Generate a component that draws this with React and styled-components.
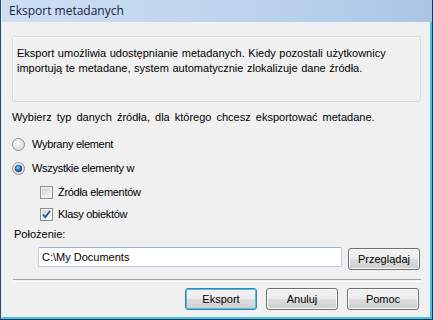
import React from "react";
import styled, { createGlobalStyle } from "styled-components";

const GlobalStyle = createGlobalStyle`
  html, body {
    margin: 0;
    padding: 0;
    background: #f0f0f0;
  }
  body {
    font-family: "Liberation Sans", Arial, sans-serif;
    font-size: 11px;
    color: #000;
  }
`;

const Radio = ({ checked }) => (
  <svg width="13" height="13" viewBox="0 0 13 13">
    <defs>
      <radialGradient id={checked ? "rOn" : "rOff"} cx="0.4" cy="0.35" r="0.7">
        <stop offset="0" stopColor="#ffffff" />
        <stop offset="1" stopColor="#d0d0d0" />
      </radialGradient>
      <radialGradient id="dot" cx="0.4" cy="0.35" r="0.7">
        <stop offset="0" stopColor="#8ad4ff" />
        <stop offset="0.6" stopColor="#1b76c4" />
        <stop offset="1" stopColor="#0a3d78" />
      </radialGradient>
    </defs>
    <circle cx="6.5" cy="6.5" r="6" fill={`url(#${checked ? "rOn" : "rOff"})`} stroke="#8e8f8f" />
    <circle cx="6.5" cy="6.5" r="4.5" fill="none" stroke="#e8e8e8" />
    {checked && <circle cx="6.5" cy="6.5" r="3.3" fill="url(#dot)" stroke="#1b3f6a" strokeWidth="0.8" />}
  </svg>
);

const Check = ({ checked }) => (
  <svg width="13" height="13" viewBox="0 0 13 13">
    <defs>
      <linearGradient id="cb" x1="0" y1="0" x2="1" y2="1">
        <stop offset="0" stopColor="#cbcfd5" />
        <stop offset="1" stopColor="#f6f6f6" />
      </linearGradient>
    </defs>
    <rect x="0.5" y="0.5" width="12" height="12" fill="#f4f4f4" stroke="#8e8f8f" />
    <rect x="2" y="2" width="9" height="9" fill="url(#cb)" stroke="#f0f0f0" strokeWidth="0.5" />
    {checked && (
      <path d="M3 6.5 L5.2 9.2 L10 3" fill="none" stroke="#2a4a8a" strokeWidth="1.8" strokeLinejoin="round" />
    )}
  </svg>
);

const App = () => (
  <>
    <GlobalStyle />
    <Window>
      <TitleBar>Eksport metadanych</TitleBar>
      <Client>
        <InfoBox>
          Eksport umożliwia udostępnianie metadanych. Kiedy pozostali użytkownicy
          <br />
          importują te metadane, system automatycznie zlokalizuje dane źródła.
        </InfoBox>
        <Prompt>Wybierz typ danych źródła, dla którego chcesz eksportować metadane.</Prompt>
        <Option $top={11}>
          <Radio />
          <Label $gap={7}>Wybrany element</Label>
        </Option>
        <Option $top={8}>
          <Radio checked />
          <Label $gap={7}>Wszystkie elementy w</Label>
        </Option>
        <Option $top={8} $indent={28}>
          <Check />
          <Label $gap={5}>Źródła elementów</Label>
        </Option>
        <Option $top={6} $indent={28}>
          <Check checked />
          <Label $gap={5}>Klasy obiektów</Label>
        </Option>
        <Caption>Położenie:</Caption>
        <PathRow>
          <PathInput defaultValue="C:\My Documents" />
          <Button $raised>Przeglądaj</Button>
        </PathRow>
        <Separator />
        <ButtonBar>
          <Button $default>Eksport</Button>
          <Button>Anuluj</Button>
          <Button>Pomoc</Button>
        </ButtonBar>
      </Client>
    </Window>
  </>
);

const Window = styled.div`
  width: 433px;
  height: 320px;
  box-sizing: border-box;
  display: flex;
  flex-direction: column;
  border-left: 1px solid #2c4d74;
  border-right: 1px solid #1d3550;
  border-bottom: 1px solid #1d3550;
  background: #f0f0f0;
`;

const TitleBar = styled.div`
  height: 22px;
  box-sizing: border-box;
  padding: 3px 0 0 7px;
  background: linear-gradient(to right, #cddff2 0%, #bcd3ec 60%, #a9c6e6 100%);
  border-left: 1px solid #dfeaf6;
  font-family: "Open Sans", "Noto Sans", sans-serif;
  font-size: 12px;
  line-height: 16px;
  color: #1c1b42;
`;

const Client = styled.div`
  flex: 1;
  display: flex;
  flex-direction: column;
  padding: 14px 9px 0 10px;
  border-left: 1px solid #dfeaf6;
  border-right: 2px solid #3fc3e6;
  border-bottom: 2px solid #3fc3e6;
  box-sizing: border-box;
`;

const InfoBox = styled.div`
  height: 66px;
  box-sizing: border-box;
  padding: 9px 0 0 4px;
  border: 1px solid #d5dde4;
  border-radius: 3px;
  box-shadow: inset 1px 1px 0 #ffffff;
  line-height: 15px;
  word-spacing: 0.5px;
`;

const Prompt = styled.div`
  margin-top: 8px;
  line-height: 15px;
  word-spacing: 2px;
`;

const Option = styled.div`
  display: flex;
  align-items: center;
  height: 16px;
  margin-top: ${(p) => p.$top}px;
  padding-left: ${(p) => p.$indent || 0}px;
`;

const Label = styled.span`
  margin-left: ${(p) => p.$gap}px;
  letter-spacing: -0.3px;
`;

const Caption = styled.div`
  margin-top: 5px;
  padding-left: 2px;
  line-height: 15px;
`;

const PathRow = styled.div`
  display: flex;
  align-items: flex-start;
  gap: 6px;
  margin-top: 5px;
  padding-left: 26px;
  height: 22px;
`;

const PathInput = styled.input`
  width: 304px;
  height: 20px;
  box-sizing: border-box;
  padding: 0 3px;
  border: 1px solid #b8cde0;
  border-top-color: #9ab3cb;
  border-radius: 2px;
  background: #fff;
  font: inherit;
  color: #000;
  outline: none;
`;

const Button = styled.button`
  width: 72px;
  height: 22px;
  margin-top: ${(p) => (p.$raised ? 1 : 0)}px;
  padding: 0;
  box-sizing: border-box;
  font: inherit;
  color: #000;
  border: 1px solid ${(p) => (p.$default ? "#3c7fb1" : "#707070")};
  border-radius: 3px;
  background: linear-gradient(to bottom, #f2f2f2 0%, #ebebeb 50%, #dddddd 51%, #cfcfcf 100%);
  box-shadow: inset 0 0 0 1px ${(p) => (p.$default ? "#48c1ee" : "#fcfcfc")};
`;

const Separator = styled.div`
  margin-top: 10px;
  height: 1px;
  border-top: 1px solid #a0a0a0;
  border-bottom: 1px solid #ffffff;
  margin-left: 1px;
`;

const ButtonBar = styled.div`
  display: flex;
  justify-content: flex-end;
  gap: 9px;
  margin-top: 6px;
  padding-right: 2px;
`;

export default App;
